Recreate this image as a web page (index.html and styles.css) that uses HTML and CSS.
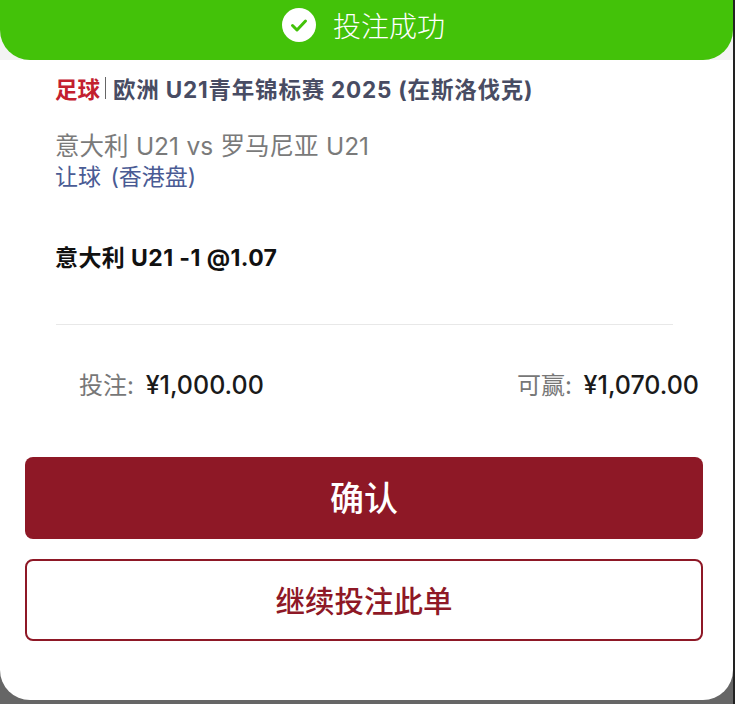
FILE: index.html
```html
<!DOCTYPE html>
<html>
<head>
    <title>投注成功</title>
    <link rel="stylesheet" href="styles.css">
</head>
<body>
    <section class="sheet">

        <header class="toast-wrap">
            <div class="toast">
                <svg class="toast-icon" viewBox="0 0 34 34">
                    <circle cx="17" cy="17" r="17" fill="#fff"/>
                    <path d="M10.5 17.5l4.5 4.5 8.5-9" fill="none" stroke="#43c209" stroke-width="3" stroke-linecap="round" stroke-linejoin="round"/>
                </svg>
                <span>投注成功</span>
            </div>
        </header>

        <div class="league">
            <span class="sport">足球</span>
            <span class="divider"></span>
            <span class="league-name">欧洲 U21青年锦标赛 2025 (在斯洛伐克)</span>
        </div>

        <div class="match">意大利 U21 vs 罗马尼亚 U21</div>
        <div class="market">让球 (香港盘)</div>
        <div class="pick">意大利 U21 -1 @1.07</div>

        <hr class="rule">

        <div class="amounts">
            <div><span class="amount-label">投注:</span> <strong>¥1,000.00</strong></div>
            <div><span class="amount-label">可赢:</span> <strong>¥1,070.00</strong></div>
        </div>

        <div class="actions">
            <button type="button" class="btn btn-confirm">确认</button>
            <button type="button" class="btn btn-again">继续投注此单</button>
        </div>

    </section>
</body>
</html>
```

FILE: styles.css
```css
html, body {
    height: 100%;
}

body {
    margin: 0;
    box-sizing: border-box;
    background-color: #666666;
    border-right: 2px solid #222222;
    font-family: "Inter", "Noto Sans CJK SC", sans-serif;
    overflow: hidden;
}

.sheet {
    height: 700px;
    padding: 0 30px 0 25px;
    box-sizing: border-box;
    background-color: #FFFFFF;
    border-radius: 0 0 30px 30px;
}

.toast-wrap {
    margin: 0 -30px 0 -25px;
    background-color: #F3F3F3;
}

.toast {
    display: flex;
    align-items: center;
    justify-content: center;
    gap: 17px;
    height: 60px;
    padding: 0 6px 10px 0;
    box-sizing: border-box;
    background-color: #43C209;
    border-radius: 0 0 30px 30px;
    color: #FFFFFF;
    font-size: 28px;
    font-weight: 300;
}

.toast-icon {
    width: 34px;
    height: 34px;
}

.league {
    display: flex;
    align-items: center;
    gap: 5px;
    margin: 14px 0 0 30px;
    height: 28px;
    color: #484C63;
    font-size: 22.5px;
    font-weight: 700;
    white-space: nowrap;
}

.sport {
    color: #C3202F;
}

.divider {
    width: 1px;
    height: 22px;
    background-color: #666666;
}

.league-name {
    margin-left: 2px;
    letter-spacing: 0.8px;
}

.match {
    margin: 29px 0 0 30px;
    color: #7A7A7A;
    font-size: 24.5px;
    line-height: 30px;
    word-spacing: 0.5px;
}

.market {
    margin: 1px 0 0 30px;
    color: #4A5B94;
    font-size: 23px;
    line-height: 30px;
    word-spacing: 3px;
}

.pick {
    margin: 51px 0 0 30px;
    color: #111111;
    font-size: 23px;
    font-weight: 700;
    letter-spacing: 0.4px;
    line-height: 30px;
}

.rule {
    margin: 51px 30px 0 31px;
    border: 0;
    border-top: 1px solid #E8E8E8;
}

.amounts {
    display: flex;
    justify-content: space-between;
    margin: 45px 4px 0 54px;
    font-size: 24px;
    line-height: 30px;
}

.amount-label {
    color: #777777;
}

.amounts strong {
    margin-left: 5px;
    color: #1A1A1A;
    font-size: 25px;
    font-weight: 500;
}

.actions {
    display: flex;
    flex-direction: column;
    gap: 20px;
    margin-top: 56px;
}

.btn {
    height: 82px;
    border-radius: 8px;
    font-family: inherit;
    cursor: pointer;
}

.btn-confirm {
    padding-bottom: 4px;
    border: 0;
    background-color: #8E1826;
    color: #FFFFFF;
    font-size: 34px;
    font-weight: 500;
}

.btn-again {
    padding-bottom: 4px;
    border: 2px solid #8E1826;
    background-color: #FFFFFF;
    color: #8E1826;
    font-size: 29.5px;
    font-weight: 500;
}
```
